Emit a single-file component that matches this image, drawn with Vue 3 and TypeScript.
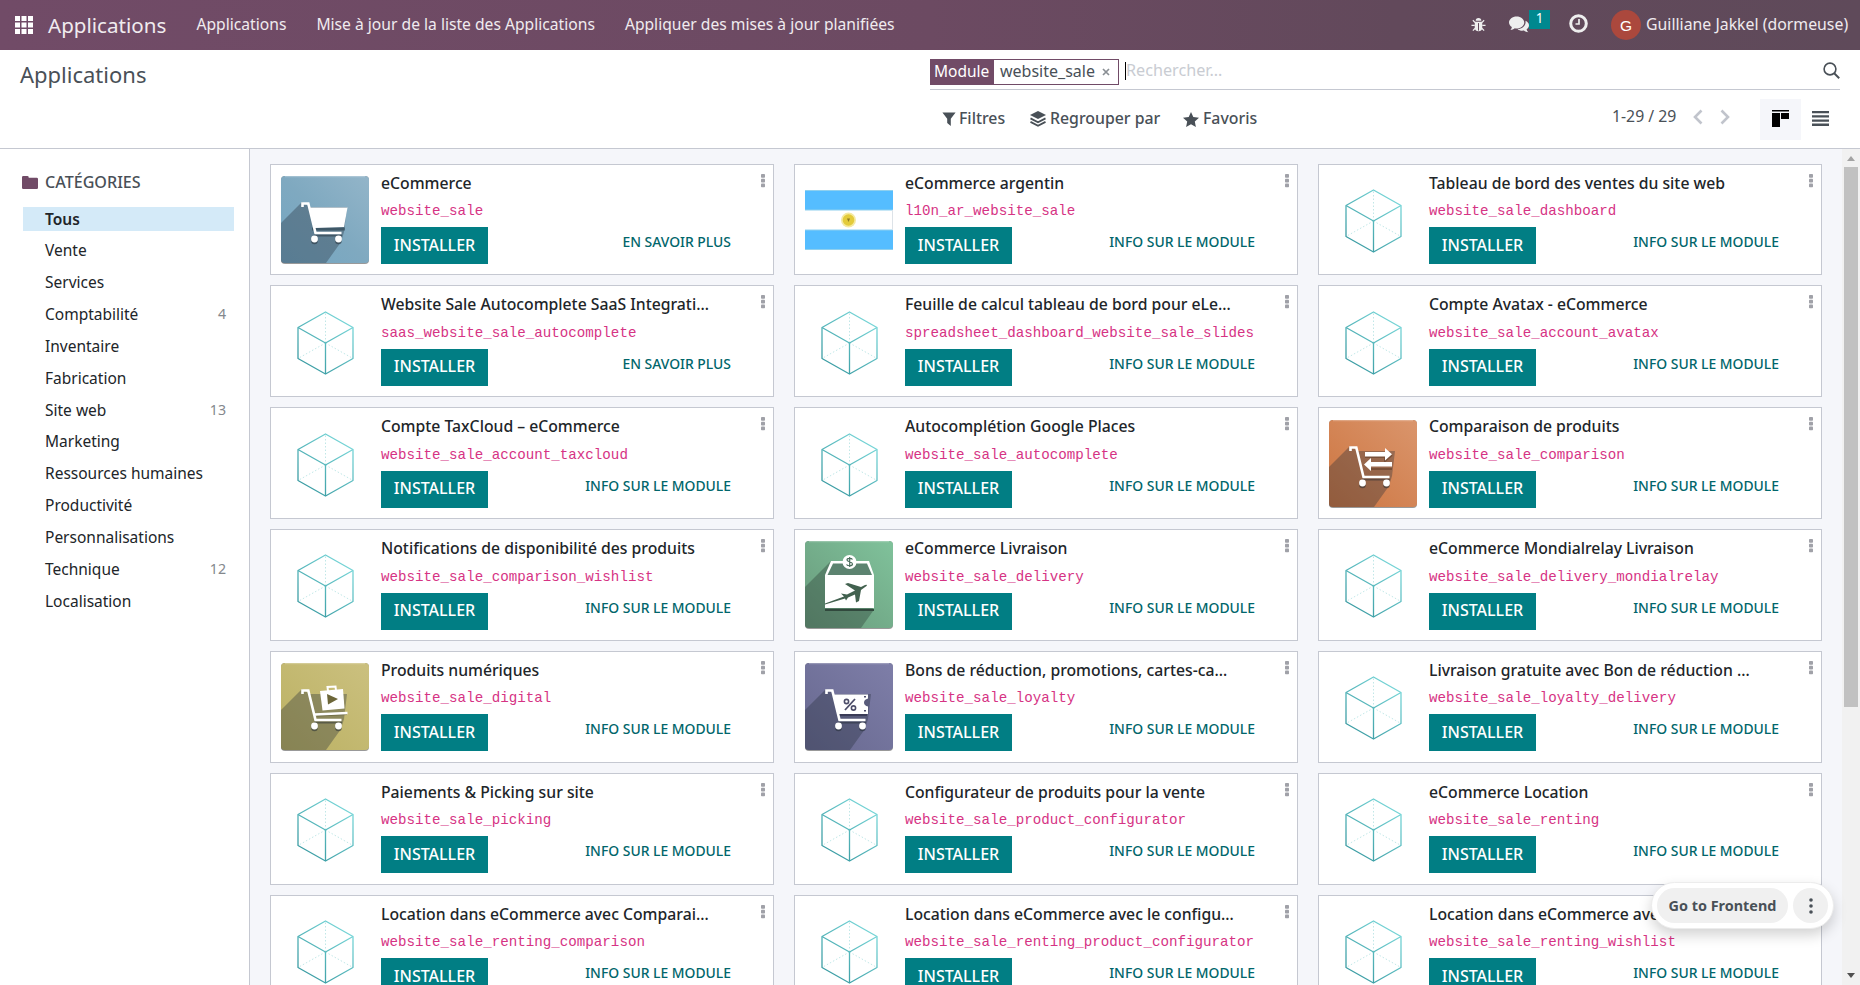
<script setup lang="ts">
interface Category {
  name: string
  count?: number
}

type Picture = 'cube' | 'cart' | 'flag' | 'compare' | 'delivery' | 'digital' | 'loyalty'

interface Module {
  title: string
  name: string
  picture: Picture
  link: string
}

const INFO = 'INFO SUR LE MODULE'
const MORE = 'EN SAVOIR PLUS'

const menus: string[] = [
  'Applications',
  'Mise à jour de la liste des Applications',
  'Appliquer des mises à jour planifiées',
]

const categories: Category[] = [
  { name: 'Tous' },
  { name: 'Vente' },
  { name: 'Services' },
  { name: 'Comptabilité', count: 4 },
  { name: 'Inventaire' },
  { name: 'Fabrication' },
  { name: 'Site web', count: 13 },
  { name: 'Marketing' },
  { name: 'Ressources humaines' },
  { name: 'Productivité' },
  { name: 'Personnalisations' },
  { name: 'Technique', count: 12 },
  { name: 'Localisation' },
]

const tile = (title: string, name: string, picture: Picture = 'cube', link: string = INFO): Module => ({
  title,
  name,
  picture,
  link,
})

const modules: Module[] = [
  tile('eCommerce', 'website_sale', 'cart', MORE),
  tile('eCommerce argentin', 'l10n_ar_website_sale', 'flag'),
  tile('Tableau de bord des ventes du site web', 'website_sale_dashboard'),
  tile('Website Sale Autocomplete SaaS Integrati…', 'saas_website_sale_autocomplete', 'cube', MORE),
  tile('Feuille de calcul tableau de bord pour eLe…', 'spreadsheet_dashboard_website_sale_slides'),
  tile('Compte Avatax - eCommerce', 'website_sale_account_avatax'),
  tile('Compte TaxCloud – eCommerce', 'website_sale_account_taxcloud'),
  tile('Autocomplétion Google Places', 'website_sale_autocomplete'),
  tile('Comparaison de produits', 'website_sale_comparison', 'compare'),
  tile('Notifications de disponibilité des produits', 'website_sale_comparison_wishlist'),
  tile('eCommerce Livraison', 'website_sale_delivery', 'delivery'),
  tile('eCommerce Mondialrelay Livraison', 'website_sale_delivery_mondialrelay'),
  tile('Produits numériques', 'website_sale_digital', 'digital'),
  tile('Bons de réduction, promotions, cartes-ca…', 'website_sale_loyalty', 'loyalty'),
  tile('Livraison gratuite avec Bon de réduction …', 'website_sale_loyalty_delivery'),
  tile('Paiements & Picking sur site', 'website_sale_picking'),
  tile('Configurateur de produits pour la vente', 'website_sale_product_configurator'),
  tile('eCommerce Location', 'website_sale_renting'),
  tile('Location dans eCommerce avec Comparai…', 'website_sale_renting_comparison'),
  tile('Location dans eCommerce avec le configu…', 'website_sale_renting_product_configurator'),
  tile('Location dans eCommerce ave…', 'website_sale_renting_wishlist'),
]
</script>

<template>
  <div class="app">
    <svg class="defs" width="0" height="0" aria-hidden="true">
      <defs>
        <linearGradient id="g-cube" x1="72" y1="14" x2="17" y2="76" gradientUnits="userSpaceOnUse">
          <stop offset="0" stop-color="#80dfe0" />
          <stop offset="1" stop-color="#2f9199" />
        </linearGradient>
        <linearGradient id="g-cart" x1="0" y1="1" x2="1" y2="0">
          <stop offset="0" stop-color="#74a6c2" /><stop offset=".5" stop-color="#7fa9c0" /><stop offset="1" stop-color="#93b5c9" />
        </linearGradient>
        <linearGradient id="g-compare" x1="0" y1="1" x2="1" y2="0">
          <stop offset="0" stop-color="#cd7540" /><stop offset="1" stop-color="#da956c" />
        </linearGradient>
        <linearGradient id="g-delivery" x1="0" y1="1" x2="1" y2="0">
          <stop offset="0" stop-color="#68997b" /><stop offset="1" stop-color="#80c29b" />
        </linearGradient>
        <linearGradient id="g-digital" x1="0" y1="1" x2="1" y2="0">
          <stop offset="0" stop-color="#bbb162" /><stop offset="1" stop-color="#cbc07f" />
        </linearGradient>
        <linearGradient id="g-loyalty" x1="0" y1="1" x2="1" y2="0">
          <stop offset="0" stop-color="#67688f" /><stop offset="1" stop-color="#7e7ea8" />
        </linearGradient>
      </defs>
    </svg>

    <header class="navbar">
      <svg class="grid-icon" viewBox="0 0 18 18" fill="#fff">
        <path d="M0 0h5v5H0zM6.500 0h5v5h-5zM13 0h5v5h-5zM0 6.500h5v5H0zM6.500 6.500h5v5h-5zM13 6.500h5v5h-5zM0 13h5v5H0zM6.500 13h5v5h-5zM13 13h5v5h-5z" />
      </svg>
      <span class="brand">Applications</span>
      <nav class="menus">
        <a v-for="menu in menus" :key="menu" class="menu">{{ menu }}</a>
      </nav>
      <div class="systray">
        <svg class="bug" viewBox="0 0 16 16">
          <path d="M5 4a3 3 0 0 1 6 0z" fill="#eee" />
          <path d="M4 5h8v6.200a4 4 0 0 1-8 0z" fill="#eee" />
          <path d="M4.500 6 2 3.500M11.500 6 14 3.500M4 9H.5M12 9h3.500M4.500 12 2 14.500M11.500 12l2.500 2.500" stroke="#eee" stroke-width="1.300" fill="none" />
          <path d="M8 6.500v8" stroke="#62495b" stroke-width="1.100" />
        </svg>
        <div class="chat">
          <svg viewBox="0 0 21 17" fill="#eee">
            <path d="M8 0c4.400 0 8 2.800 8 6.300s-3.600 6.300-8 6.300c-.7 0-1.300 0-1.900-.2-1.400 1-3 1.700-4.600 1.800.9-.9 1.400-1.900 1.500-3C1.200 10 0 8.300 0 6.300 0 2.800 3.600 0 8 0z" />
            <path d="M17.300 4.600C19.500 5.600 21 7.300 21 9.300c0 1.700-1 3.200-2.500 4.200.2 1.300.8 2.300 1.800 3.200-1.700-.1-3.300-.8-4.600-1.900-2.500.5-5-.1-6.700-1.400 5 0 9.200-3.700 8.300-8.800z" />
          </svg>
          <span class="badge">1</span>
        </div>
        <svg class="clock" viewBox="0 0 19 19" fill="none" stroke="#eee">
          <circle cx="9.500" cy="9.500" r="7.800" stroke-width="3" />
          <path d="M10 5v5H6.500" stroke-width="1.700" />
        </svg>
        <span class="avatar">G</span>
        <span class="user">Guilliane Jakkel (dormeuse)</span>
      </div>
    </header>

    <section class="control">
      <h1 class="page-title">Applications</h1>
      <div class="search-side">
        <div class="search">
          <div class="facet">
            <span class="facet-label">Module</span>
            <span class="facet-value">website_sale</span>
            <svg class="facet-x" viewBox="0 0 8 8"><path d="M1 1l6 6M7 1 1 7" stroke="#8a8f94" stroke-width="1.700" /></svg>
          </div>
          <span class="caret"></span>
          <span class="placeholder">Rechercher…</span>
          <svg class="magnifier" viewBox="0 0 17 17" fill="none" stroke="#495057">
            <circle cx="7" cy="7" r="5.900" stroke-width="1.600" />
            <path d="m11.200 11.200 5 5" stroke-width="2" />
          </svg>
        </div>
        <div class="tools">
          <div class="filter filter-a">
            <svg viewBox="0 0 14 14" width="14" height="14"><path d="M.4.500h13.200L8.800 6.700V14L5.200 11V6.700z" fill="#495057" /></svg>
            <span>Filtres</span>
          </div>
          <div class="filter filter-b">
            <svg viewBox="0 0 16 16" width="16" height="16">
              <path d="m8 0 8 4-8 4-8-4z" fill="#495057" />
              <path d="m.5 7.400 7.500 3.800 7.500-3.800M.5 10.900 8 14.700l7.500-3.800" fill="none" stroke="#495057" stroke-width="1.800" />
            </svg>
            <span>Regrouper par</span>
          </div>
          <div class="filter">
            <svg viewBox="0 0 16 15" width="16" height="15"><path d="m8 0 2.300 5 5.700.7-4.200 3.800 1.100 5.500L8 12.300 3.100 15l1.100-5.500L0 5.700 5.700 5z" fill="#495057" /></svg>
            <span>Favoris</span>
          </div>
          <span class="pager">1-29 / 29</span>
          <svg class="chev" viewBox="0 0 10 16"><path d="M8.500 1.500 2 8l6.500 6.500" fill="none" stroke="#c1c4cc" stroke-width="2.600" /></svg>
          <svg class="chev chev-next" viewBox="0 0 10 16"><path d="M1.500 1.500 8 8l-6.500 6.500" fill="none" stroke="#c1c4cc" stroke-width="2.600" /></svg>
          <div class="view view-on">
            <svg viewBox="0 0 17 17" width="17" height="17"><path d="M0 0h17v1.500H0zM0 3h8v14H0zM9 3h8v6H9z" fill="#000" /></svg>
          </div>
          <div class="view">
            <svg viewBox="0 0 17 15" width="17" height="15"><path d="M0 0h17v2.300H0zM0 4.200h17v2.300H0zM0 8.400h17v2.300H0zM0 12.600h17v2.300H0z" fill="#495057" /></svg>
          </div>
        </div>
      </div>
    </section>

    <main class="body">
      <aside class="sidebar">
        <h2 class="side-head">
          <svg viewBox="0 0 16 13" width="16" height="13"><path d="M1.300 0h4Q6.700 0 6.700 1.300v.5h8q1.300 0 1.300 1.300v8.600Q16 13 14.700 13H1.300Q0 13 0 11.700V1.300Q0 0 1.300 0z" fill="#714b67" /></svg>
          <span>CATÉGORIES</span>
        </h2>
        <ul class="cats">
          <li v-for="(cat, i) in categories" :key="cat.name" class="cat" :class="{ active: i === 0 }">
            <span class="cat-name">{{ cat.name }}</span>
            <span v-if="cat.count" class="cat-count">{{ cat.count }}</span>
          </li>
        </ul>
      </aside>

      <div class="kanban">
        <article v-for="mod in modules" :key="mod.name" class="card">
          <svg class="picture" viewBox="0 0 88 88">
            <g v-if="mod.picture === 'cube'" fill="none" stroke="url(#g-cube)" stroke-width="1.300" stroke-linejoin="round">
              <path d="M44.500 45V14M44.500 45 17 60.500M44.500 45 72 60.500" stroke="#b9e4e4" stroke-width=".9" stroke-dasharray="1.500 2" />
              <path d="M44.500 14 72 29.500v31L44.500 76 17 60.500v-31z" />
              <path d="m17 29.500 27.500 15.500L72 29.500M44.500 45v31" />
            </g>
            <g v-else-if="mod.picture === 'flag'">
              <path d="M0 14h88v60H0z" fill="#55bdff" />
              <path d="M0 34h88v20H0z" fill="#fff" />
              <path d="M0 14.500h88M0 34h88M0 54h88M0 73.500h88" stroke="#8fd0ee" />
              <path d="M87.500 34v20" stroke="#dde3e8" />
              <circle cx="43.500" cy="44" r="7.500" fill="#f5e9a0" />
              <circle cx="43.500" cy="44" r="5.800" fill="#e3cb3b" />
              <path d="M42 42.500h3l-1.500 3.500z" fill="#8d7a22" />
            </g>
            <template v-else>
              <rect width="88" height="88" rx="4" fill="#000" opacity=".4" />
              <rect width="88" height="87" rx="4" :fill="`url(#g-${mod.picture})`" />
              <path v-if="mod.picture === 'delivery'" d="M0 46 26 20 66 34l2 36-12 17H3q-3 0-3-3z" fill="#2c3f38" opacity=".38" />
              <path v-else d="M0 47 21 26l8 5h37l-3 25-3 10-15 21H3q-3 0-3-3z" fill="#222c38" opacity=".34" />
              <path d="M4 .7h80" stroke="#fff" opacity=".3" />

              <g v-if="mod.picture === 'cart'">
                <path d="M31 53h33" stroke="#1f333f" stroke-width="3" opacity=".5" />
                <path d="M28 31.500h38.500L63 51l-29 1z" fill="#fff" />
              </g>
              <g v-else-if="mod.picture === 'compare'" fill="#fff">
                <path d="M36 37h20v4l7-6M42 49h21" fill="none" stroke="#5a3824" stroke-width="2" opacity=".5" />
                <path d="M36 32h20v-4l7 6.200-7 6.200v-4H36zM63 42H42v-4l-7 6.500 7 6.500v-4.500h21z" />
              </g>
              <g v-else-if="mod.picture === 'digital'">
                <path d="m47 28-.5-4 8-.5.5 4" fill="none" stroke="#fff" stroke-width="2" />
                <path d="m39 28 23-2 1.500 19.500-22 2z" fill="#fff" />
                <path d="m46 31 11 5-10 5.500z" fill="#6c6638" />
                <path d="M36 52.500 66 51" stroke="#4d482b" stroke-width="2" opacity=".5" />
                <path d="M34 51.500 66.500 50" stroke="#fff" stroke-width="2.500" />
              </g>
              <g v-else-if="mod.picture === 'loyalty'">
                <path d="M34 52h28" stroke="#272840" stroke-width="2" opacity=".6" />
                <path d="M28 31.500h35v4q-4 1-4 4t4 4V51H33z" fill="#fff" />
                <path d="M50 36 40 47" stroke="#4c4d69" stroke-width="1.800" />
                <circle cx="41.500" cy="38.500" r="2.100" fill="none" stroke="#4c4d69" stroke-width="1.600" />
                <circle cx="48.500" cy="45" r="2.100" fill="none" stroke="#4c4d69" stroke-width="1.600" />
                <path d="M60 33v1.500M60 47v1.500" stroke="#4c4d69" stroke-width="2" />
              </g>

              <g v-if="mod.picture === 'delivery'">
                <path d="M20 68h49v2H20z" fill="#31493d" />
                <path d="M20 67V34l6-14h38l5 14v33z" fill="#fff" />
                <path d="M22.500 34 28 22.500h34L67 34z" fill="#5c8370" />
                <circle cx="44.500" cy="21" r="7" fill="#fff" />
                <path d="M47.500 18.500c-1-1.500-5.500-1.500-5.500.5s5.500 1.500 5.500 4-5 2-6 .5M44.700 16v10" fill="none" stroke="#4c6e5e" stroke-width="1.200" />
                <path d="m20 62.500 19-7-3-3 6 1 8-4-10-6.500 3-1 13 4 4-2q3-1 1.500 1L56 49l-2 11-3 1.500-1-8-7 3-2 3-1-2-20 6z" fill="#42614f" />
              </g>
              <g v-else>
                <path d="M33 59.500h28" stroke="#1e2830" stroke-width="2" opacity=".45" />
                <circle cx="33.500" cy="65" r="3.300" fill="#1e2830" opacity=".5" /><circle cx="57.500" cy="65" r="3.300" fill="#1e2830" opacity=".5" />
                <path d="M21.500 31v-3.500h5.800L34.500 57H60.500" fill="none" stroke="#fff" stroke-width="2.600" />
                <circle cx="33.500" cy="63" r="3.400" fill="#fff" /><circle cx="57.500" cy="63" r="3.400" fill="#fff" />
              </g>
            </template>
          </svg>
          <div class="info">
            <h3 class="card-title">{{ mod.title }}</h3>
            <code class="tech">{{ mod.name }}</code>
            <div class="actions">
              <button class="install">INSTALLER</button>
              <a class="link">{{ mod.link }}</a>
            </div>
          </div>
          <svg class="dots" viewBox="0 0 4 14" fill="#a0a1a8">
            <rect width="4" height="3.700" rx=".8" /><rect y="4.800" width="4" height="3.700" rx=".8" /><rect y="9.600" width="4" height="3.700" rx=".8" />
          </svg>
        </article>
      </div>

      <div class="scrollbar">
        <svg viewBox="0 0 18 18" width="18" height="18"><path d="m5 12 4-5 4 5z" fill="#a3a3a3" /></svg>
        <div class="thumb"></div>
        <svg viewBox="0 0 18 18" width="18" height="18"><path d="m5 6 4 5 4-5z" fill="#505050" /></svg>
      </div>
    </main>

    <div class="floating">
      <span class="go">Go to Frontend</span>
      <span class="more">
        <svg viewBox="0 0 4 16" width="4" height="16" fill="#495057"><circle cx="2" cy="2" r="1.800" /><circle cx="2" cy="8" r="1.800" /><circle cx="2" cy="14" r="1.800" /></svg>
      </span>
    </div>
  </div>
</template>

<style>
html,
body {
  margin: 0;
  overflow: hidden;
}
</style>

<style scoped>
.app {
  position: relative;
  display: flex;
  flex-direction: column;
  height: 985px;
  overflow: hidden;
  background: #fff;
  color: #212529;
  font-family: 'Noto Sans', 'Open Sans', sans-serif;
  font-size: 15.5px;
  line-height: 24px;
  white-space: nowrap;
}
.app * {
  box-sizing: border-box;
}
.defs {
  position: absolute;
}
svg {
  display: block;
  flex: none;
}

.navbar {
  display: flex;
  align-items: center;
  flex: none;
  height: 50px;
  padding: 0 12px 0 15px;
  background: linear-gradient(90deg, #714b67, #6c4a62 50%, #62495b 75%, #5f4a5a);
  color: #f0ebef;
}
.grid-icon {
  width: 18px;
  height: 18px;
}
.brand {
  width: 148.5px;
  margin-left: 15px;
  font-size: 20.6px;
}
.menus {
  display: flex;
  padding-bottom: 2px;
}
.menu {
  margin-right: 30px;
  font-size: 15.65px;
}
.systray {
  display: flex;
  align-items: center;
  margin-left: auto;
}
.bug {
  width: 15px;
  height: 15px;
  margin: 0 23px 2px 0;
}
.chat {
  display: flex;
  width: 60px;
  padding-bottom: 2px;
}
.chat svg {
  width: 20px;
  height: 17px;
}
.badge {
  width: 21px;
  height: 19px;
  margin: -6px 0 -3px;
  background: #00888f;
  color: #fff;
  font-size: 13.5px;
  line-height: 17px;
  text-align: center;
}
.clock {
  width: 19px;
  height: 19px;
  margin: 0 23px 3px 0;
}
.avatar {
  width: 30px;
  height: 30px;
  margin-right: 5px;
  border-radius: 50%;
  background: #ab483d;
  color: #fff;
  font-family: 'Liberation Sans', sans-serif;
  line-height: 31px;
  text-align: center;
}
.user {
  width: 202px;
  padding-bottom: 2px;
  font-size: 15.85px;
}

.control {
  display: flex;
  justify-content: space-between;
  flex: none;
  height: 99px;
  padding: 0 20px;
  border-bottom: 1px solid #c5c8d1;
}
.page-title {
  margin: 12px 0 0;
  color: #495057;
  font-size: 22px;
  font-weight: 400;
}
.search-side {
  width: 910px;
}
.search {
  display: flex;
  align-items: center;
  height: 40px;
  padding-top: 4px;
  border-bottom: 1px solid #c5c8d1;
}
.facet {
  display: flex;
  align-items: center;
  width: 189px;
  height: 26px;
  border: 1px solid #714b67;
  color: #495057;
}
.facet-label {
  width: 63px;
  height: 24px;
  padding-left: 3px;
  background: #714b67;
  color: #fff;
  line-height: 22px;
}
.facet-value {
  width: 108px;
  padding: 0 0 2px 6px;
  font-size: 16px;
}
.facet-x {
  width: 8px;
  height: 8px;
}
.caret {
  width: 1px;
  height: 18px;
  margin: 0 0 2px 6px;
  background: #000;
}
.placeholder {
  padding-bottom: 4px;
  color: #c9ccd2;
  font-size: 16.2px;
  line-height: 22px;
}
.magnifier {
  width: 17px;
  height: 17px;
  margin: 0 0 3px auto;
}
.tools {
  display: flex;
  align-items: center;
  height: 58px;
  padding-left: 12px;
  color: #495057;
}
.filter {
  display: flex;
  align-items: center;
  gap: 4px;
  font-size: 15.85px;
  font-weight: 500;
}
.filter span {
  padding-bottom: 2px;
}
.filter-a {
  width: 88px;
  gap: 3px;
}
.filter-b {
  width: 153px;
}
.pager {
  width: 81px;
  margin: -6px 0 0 auto;
  font-size: 15.8px;
}
.chev {
  width: 10px;
  height: 16px;
  margin: -5px 17px 0 0;
}
.chev-next {
  margin-right: 30px;
}
.view {
  display: flex;
  align-items: center;
  justify-content: center;
  width: 39px;
  height: 41px;
  padding-bottom: 1px;
}
.view-on {
  width: 41px;
  background: #f5f6fa;
}

.body {
  display: flex;
  flex: 1;
  min-height: 0;
}
.sidebar {
  flex: none;
  width: 250px;
  padding: 21px 15px 0 22px;
  border-right: 1px solid #c5c8d1;
}
.side-head {
  display: flex;
  align-items: center;
  gap: 7px;
  margin: 0;
  height: 24px;
  color: #495057;
  font-size: 16.1px;
  font-weight: 500;
}
.cats {
  margin: 12.6px 0 0;
  padding: 0;
  list-style: none;
}
.cat {
  display: flex;
  align-items: center;
  justify-content: space-between;
  height: 24px;
  margin: 0 0 7.84px 1px;
  padding: 0 8px 0 22px;
}
.active {
  background: #d4eaf8;
  font-weight: 600;
}
.cat-count {
  color: #84888d;
  font-size: 14.2px;
}

.kanban {
  display: grid;
  flex: 1;
  grid-template-columns: repeat(3, 504px);
  grid-auto-rows: 111.85px;
  align-content: start;
  gap: 10px 20px;
  padding: 14.6px 0 0 20px;
  overflow: hidden;
  background: #f5f6fa;
}
.card {
  display: flex;
  padding: 0 8px 0 10px;
  border: 1px solid #c5c8d1;
  background: #fff;
}
.picture {
  width: 88px;
  height: 88px;
  margin: 11.3px 12px 0 0;
}
.info {
  flex: 1;
  min-width: 0;
}
.card-title {
  height: 24px;
  margin: 6px 0 0;
  font-size: 15.75px;
  font-weight: 550;
}
.tech {
  display: block;
  margin-top: 5.5px;
  color: #d63384;
  font-family: 'Liberation Mono', monospace;
  font-size: 14.19px;
  line-height: 22px;
}
.actions {
  display: flex;
  align-items: flex-start;
  justify-content: space-between;
  margin-top: 5px;
  padding-right: 30px;
}
.install {
  width: 107px;
  height: 37px;
  padding: 0;
  border: 0;
  background: #017e84;
  color: #fff;
  font: 500 16px/34px 'Noto Sans', sans-serif;
  padding-bottom: 2px;
}
.link {
  padding-top: 4px;
  color: #01666b;
  font-size: 13.9px;
  font-weight: 500;
  line-height: 22px;
}
.dots {
  width: 4px;
  height: 14px;
  margin-top: 9px;
}

.scrollbar {
  display: flex;
  flex: none;
  flex-direction: column;
  width: 18px;
  background: #f1f1f1;
}
.thumb {
  width: 14px;
  height: 540px;
  margin: 0 2px auto;
  background: #c1c1c1;
}

.floating {
  position: absolute;
  top: 882px;
  left: 1651px;
  display: flex;
  align-items: center;
  gap: 5px;
  width: 183px;
  height: 47px;
  padding: 0 5px;
  border: 1px solid #ececec;
  border-radius: 24px;
  background: #fff;
  box-shadow: 0 6px 14px rgb(0 0 0 / 18%);
}
.go {
  flex: 1;
  height: 35px;
  border-radius: 18px;
  background: #f0f0f0;
  color: #495057;
  font-size: 14.4px;
  font-weight: 700;
  line-height: 35px;
  text-align: center;
}
.more {
  display: flex;
  align-items: center;
  justify-content: center;
  width: 35px;
  height: 35px;
  border-radius: 50%;
  background: #f0f0f0;
}
</style>
